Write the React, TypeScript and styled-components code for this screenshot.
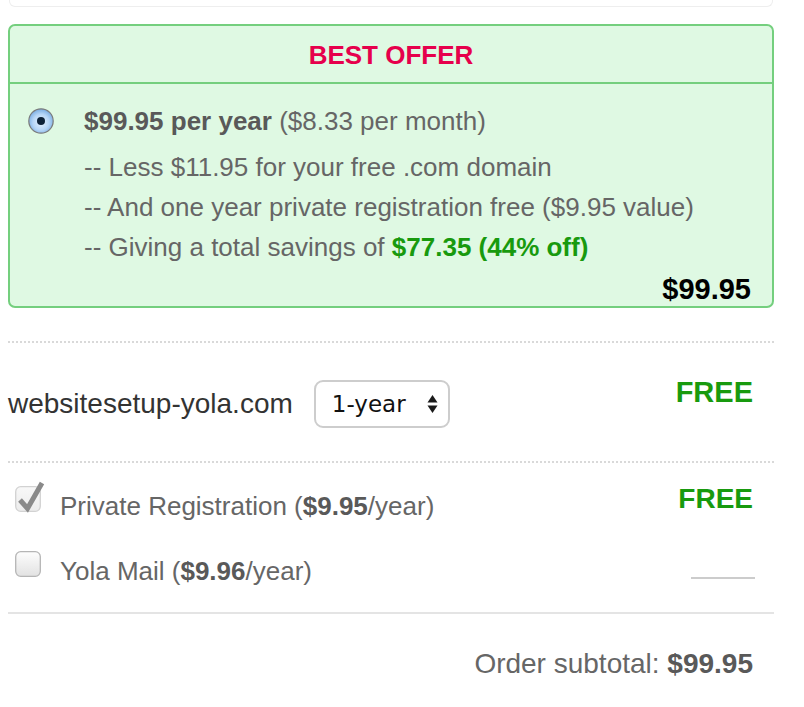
import React from "react";
import styled, { createGlobalStyle } from "styled-components";

const Global = createGlobalStyle`
  html, body { margin: 0; padding: 0; background: #fff; }
  body { font-family: "Liberation Sans", Arial, Helvetica, sans-serif; }
`;

const Page = styled.div`
  width: 766px;
  margin-left: 8px;
  color: #666;
`;

const TopCard = styled.div`
  height: 6px;
  margin: 0 1px;
  border: 1px solid #eeeeee;
  border-top: none;
  border-radius: 0 0 6px 6px;
`;

const Offer = styled.section`
  margin: 17px 0 33px;
  border: 2px solid #74cf7e;
  border-radius: 7px;
  background: #dff9e3;
`;

const OfferHeader = styled.h2`
  margin: 0;
  height: 56px;
  line-height: 58px;
  border-bottom: 2px solid #74cf7e;
  text-align: center;
  font-size: 26px;
  font-weight: bold;
  color: #e6004c;
`;

const OfferBody = styled.div`
  display: flex;
  align-items: flex-start;
  padding: 17px 21px 0 18px;
  gap: 30px;
`;

const RadioWrap = styled.div`
  flex: none;
  width: 26px;
  height: 26px;
  margin-top: 7px;
`;

const OfferLines = styled.div`
  flex: 1;
  font-size: 26px;
  line-height: 40px;
`;

const Line = styled.div<{ $first?: boolean }>`
  white-space: nowrap;
  margin-bottom: ${(p) => (p.$first ? "6px" : "0")};
`;

const Strong = styled.b`
  color: #595959;
`;

const Green = styled.b`
  color: #189a0e;
`;

const OfferPrice = styled.div`
  text-align: right;
  padding: 6px 21px 1px 0;
  font-size: 29px;
  line-height: 32px;
  font-weight: bold;
  color: #000;
`;

const Dotted = styled.hr`
  margin: 0;
  border: none;
  border-top: 2px dotted #d9d9d9;
`;

const Solid = styled.hr`
  margin: 0;
  border: none;
  border-top: 2px solid #e4e4e4;
`;

const DomainRow = styled.div`
  display: flex;
  justify-content: space-between;
  align-items: flex-start;
  padding: 37px 21px 33px 0;
`;

const DomainLeft = styled.div`
  display: flex;
  align-items: center;
  gap: 21px;
`;

const DomainName = styled.span`
  font-size: 28px;
  color: #333;
`;

const Select = styled.div`
  box-sizing: border-box;
  width: 136px;
  height: 48px;
  border: 2px solid #cdcdcd;
  border-radius: 9px;
  background: #fff;
  display: flex;
  align-items: center;
  justify-content: space-between;
  padding: 0 10px 0 16px;
  font-family: "DejaVu Sans", sans-serif;
  font-size: 23px;
  color: #111;
`;

const Free = styled.span<{ $size?: number }>`
  font-size: ${(p) => p.$size ?? 28}px;
  line-height: 24px;
  font-weight: bold;
  color: #189a0e;
`;

const Addons = styled.div`
  display: flex;
  flex-direction: column;
  gap: 32px;
  padding: 23px 21px 28px 7px;
`;

const AddonRow = styled.div`
  height: 33px;
  display: flex;
  align-items: flex-start;
`;

const Box = styled.div`
  flex: none;
  width: 26px;
  height: 26px;
  margin-right: 19px;
`;

const AddonLabel = styled.span`
  flex: 1;
  margin-top: 7px;
  font-size: 26px;
  line-height: 26px;
  color: #666;
`;

const AddonFree = styled(Free)`
  line-height: 26px;
`;

const Blank = styled.span`
  width: 64px;
  height: 26px;
  margin-right: -2px;
  border-bottom: 2px solid #cccccc;
`;

const Subtotal = styled.div`
  text-align: right;
  padding: 36px 21px 0 0;
  font-size: 28px;
  line-height: 28px;
  color: #666;
`;

const Radio = () => (
  <svg width="26" height="26" viewBox="0 0 26 26">
    <defs>
      <radialGradient id="rg" cx="50%" cy="55%" r="55%">
        <stop offset="0%" stopColor="#e6f2fe" />
        <stop offset="60%" stopColor="#b6d6f7" />
        <stop offset="100%" stopColor="#76abe2" />
      </radialGradient>
    </defs>
    <circle cx="13" cy="13" r="12.2" fill="url(#rg)" stroke="#7c7c7c" strokeWidth="1.2" />
    <circle cx="13" cy="13" r="4" fill="#0d2238" />
  </svg>
);

const CheckBox = ({ checked }: { checked?: boolean }) => (
  <svg width="26" height="26" viewBox="0 0 26 26" style={{ overflow: "visible" }}>
    <defs>
      <linearGradient id={checked ? "cg1" : "cg2"} x1="0" y1="0" x2="0" y2="1">
        <stop offset="0%" stopColor={checked ? "#f8f8f8" : "#fdfdfd"} />
        <stop offset="100%" stopColor={checked ? "#ececec" : "#e2e2e2"} />
      </linearGradient>
    </defs>
    <rect
      x="0.7"
      y="0.7"
      width="24.6"
      height="24.6"
      rx="5"
      fill={`url(#${checked ? "cg1" : "cg2"})`}
      stroke={checked ? "#d2d2d2" : "#b5b5b5"}
      strokeWidth="1.3"
    />
    {checked && (
      <path
        d="M5 14 L12.5 22.5 L27 -3"
        fill="none"
        stroke="#8a8a8a"
        strokeWidth="5"
        strokeLinecap="butt"
        strokeLinejoin="miter"
      />
    )}
  </svg>
);

const Arrows = () => (
  <svg width="11" height="18" viewBox="0 0 11 18">
    <path d="M5.5 0 L10.5 7.5 L0.5 7.5 Z" fill="#1a1a1a" />
    <path d="M5.5 18 L10.5 10.5 L0.5 10.5 Z" fill="#1a1a1a" />
  </svg>
);

export default function App() {
  return (
    <>
      <Global />
      <Page>
        <TopCard />
        <Offer>
          <OfferHeader>BEST OFFER</OfferHeader>
          <OfferBody>
            <RadioWrap>
              <Radio />
            </RadioWrap>
            <OfferLines>
              <Line $first>
                <Strong>$99.95 per year</Strong> ($8.33 per month)
              </Line>
              <Line>-- Less $11.95 for your free .com domain</Line>
              <Line>-- And one year private registration free ($9.95 value)</Line>
              <Line>
                -- Giving a total savings of <Green>$77.35 (44% off)</Green>
              </Line>
            </OfferLines>
          </OfferBody>
          <OfferPrice>$99.95</OfferPrice>
        </Offer>
        <Dotted />
        <DomainRow>
          <DomainLeft>
            <DomainName>websitesetup-yola.com</DomainName>
            <Select>
              <span>1-year</span>
              <Arrows />
            </Select>
          </DomainLeft>
          <Free $size={29}>FREE</Free>
        </DomainRow>
        <Dotted />
        <Addons>
          <AddonRow>
            <Box>
              <CheckBox checked />
            </Box>
            <AddonLabel>
              Private Registration (<Strong>$9.95</Strong>/year)
            </AddonLabel>
            <AddonFree>FREE</AddonFree>
          </AddonRow>
          <AddonRow>
            <Box>
              <CheckBox />
            </Box>
            <AddonLabel>
              Yola Mail (<Strong>$9.96</Strong>/year)
            </AddonLabel>
            <Blank />
          </AddonRow>
        </Addons>
        <Solid />
        <Subtotal>
          Order subtotal: <Strong>$99.95</Strong>
        </Subtotal>
      </Page>
    </>
  );
}
